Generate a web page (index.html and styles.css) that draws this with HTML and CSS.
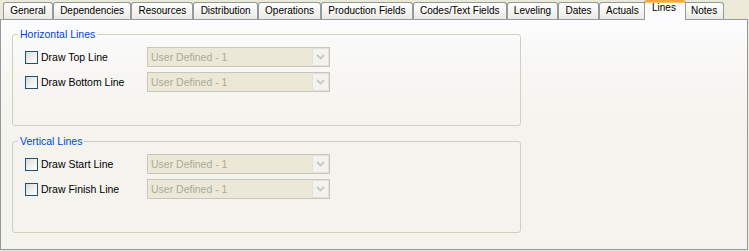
FILE: index.html
```html
<!DOCTYPE html>
<html>
<head>
<meta charset="utf-8">
<link rel="stylesheet" href="styles.css">
</head>
<body>
<div class="window">
  <div class="tabs">
    <div class="tab">General</div>
    <div class="tab">Dependencies</div>
    <div class="tab">Resources</div>
    <div class="tab">Distribution</div>
    <div class="tab">Operations</div>
    <div class="tab">Production Fields</div>
    <div class="tab">Codes/Text Fields</div>
    <div class="tab">Leveling</div>
    <div class="tab">Dates</div>
    <div class="tab">Actuals</div>
    <div class="tab active">Lines</div>
    <div class="tab">Notes</div>
  </div>
  <div class="panel">
    <fieldset class="group">
      <legend>Horizontal Lines</legend>
      <div class="row">
        <label class="opt"><span class="check"></span><span class="label">Draw Top Line</span></label>
        <div class="combo"><span class="combo-text">User Defined - 1</span><span class="combo-btn"><svg width="9" height="6" viewBox="0 0 9 6"><polyline points="1,1 4.5,4.5 8,1" fill="none" stroke="#cbc9bd" stroke-width="1.8"/></svg></span></div>
      </div>
      <div class="row">
        <label class="opt"><span class="check"></span><span class="label">Draw Bottom Line</span></label>
        <div class="combo"><span class="combo-text">User Defined - 1</span><span class="combo-btn"><svg width="9" height="6" viewBox="0 0 9 6"><polyline points="1,1 4.5,4.5 8,1" fill="none" stroke="#cbc9bd" stroke-width="1.8"/></svg></span></div>
      </div>
    </fieldset>
    <fieldset class="group">
      <legend>Vertical Lines</legend>
      <div class="row">
        <label class="opt"><span class="check"></span><span class="label">Draw Start Line</span></label>
        <div class="combo"><span class="combo-text">User Defined - 1</span><span class="combo-btn"><svg width="9" height="6" viewBox="0 0 9 6"><polyline points="1,1 4.5,4.5 8,1" fill="none" stroke="#cbc9bd" stroke-width="1.8"/></svg></span></div>
      </div>
      <div class="row">
        <label class="opt"><span class="check"></span><span class="label">Draw Finish Line</span></label>
        <div class="combo"><span class="combo-text">User Defined - 1</span><span class="combo-btn"><svg width="9" height="6" viewBox="0 0 9 6"><polyline points="1,1 4.5,4.5 8,1" fill="none" stroke="#cbc9bd" stroke-width="1.8"/></svg></span></div>
      </div>
    </fieldset>
  </div>
</div>
</body>
</html>
```
FILE: styles.css
```css
html, body {
  margin: 0;
  padding: 0;
  background: #ece9d8;
  font-family: "Liberation Sans", Arial, sans-serif;
  color: #000;
}

.window {
  width: 748px;
  height: 250px;
  display: flex;
  flex-direction: column;
}

.tabs {
  display: flex;
  align-items: flex-end;
  height: 19px;
  padding-left: 3px;
  position: relative;
  z-index: 2;
}

.tab {
  box-sizing: border-box;
  height: 17px;
  padding: 0 6.2px;
  border: 1px solid #919b9c;
  border-bottom: none;
  border-radius: 3px 3px 0 0;
  background: linear-gradient(#fefefe, #f4f3ef 60%, #e9e8e2);
  font-size: 10px;
  line-height: 16px;
  white-space: nowrap;
}

.tab.active {
  height: 20px;
  margin: 0 -2px -1px;
  padding: 0 9px 0 7px;
  border-top: 2px solid #f2a83a;
  box-shadow: inset 0 1px 0 #ffc85a;
  background: #fcfcfe;
  line-height: 12px;
  position: relative;
  z-index: 3;
}

.panel {
  flex: 1;
  box-sizing: border-box;
  border: 1px solid #919b9c;
  background: linear-gradient(#fcfcfe 0, #f7f6f2 60px, #f4f3ee 115px, #f4f3ee);
  padding: 8px 0 0 11px;
  position: relative;
  z-index: 1;
}

.group {
  box-sizing: border-box;
  width: 509px;
  margin: 0 0 9px 0;
  padding: 6px 12px 33px 12px;
  border: 1px solid #d0d0bf;
  border-radius: 3px;
  display: flex;
  flex-direction: column;
  gap: 5px;
}

.group legend {
  font-size: 10.5px;
  line-height: 13px;
  color: #0046d5;
  padding: 0 2px;
  margin-left: -7px;
}

.row {
  display: flex;
  align-items: center;
  height: 20px;
}

.opt {
  display: flex;
  align-items: center;
  width: 122px;
}

.check {
  box-sizing: border-box;
  width: 13px;
  height: 13px;
  border: 1px solid #1c5180;
  background: linear-gradient(135deg, #dcdcd7, #f6f6f3 70%, #fbfbf9);
  margin-right: 3px;
  flex: none;
}

.label {
  font-size: 10.5px;
}

.combo {
  box-sizing: border-box;
  width: 183px;
  height: 20px;
  border: 1px solid #c9c7ba;
  background: #ebe8d7;
  display: flex;
  align-items: center;
  padding: 0 0 0 3px;
}

.combo-text {
  flex: 1;
  font-size: 10.5px;
  color: #aca899;
}

.combo-btn {
  box-sizing: border-box;
  width: 17px;
  height: 18px;
  border: 1px solid #e4e2d8;
  border-radius: 1px;
  background: #f3f2ee;
  display: flex;
  align-items: center;
  justify-content: center;
}
```
